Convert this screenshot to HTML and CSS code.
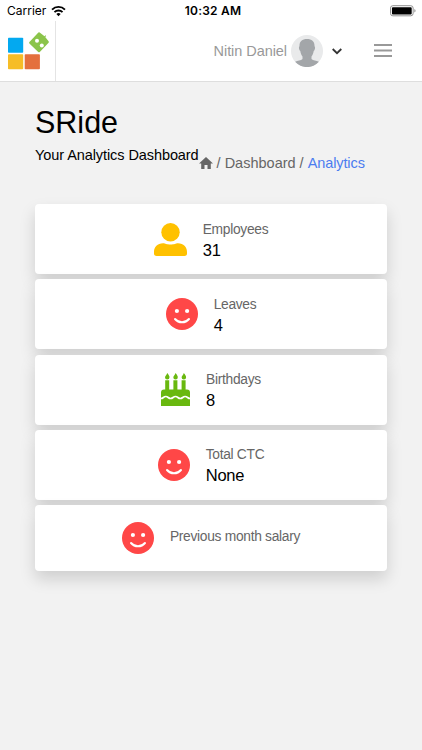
FILE: index.html
```html
<!DOCTYPE html>
<html lang="en">
<head>
    <meta charset="UTF-8">
    <meta name="viewport" content="width=device-width, initial-scale=1">
    <title>SRide</title>
    <link rel="stylesheet" href="styles.css">
</head>
<body>
    <svg width="0" height="0" class="icon-defs">
        <symbol id="smile" viewBox="0 0 32 32">
            <circle cx="16" cy="16" r="16" fill="#ff4747"/>
            <circle cx="10.9" cy="13" r="2.1" fill="#fff"/>
            <circle cx="21.1" cy="13" r="2.1" fill="#fff"/>
            <path d="M9 21c3.600 4.400 10.400 4.400 14 0" fill="none" stroke="#fff" stroke-width="2" stroke-linecap="round"/>
        </symbol>
    </svg>

    <div class="status-bar">
        <div class="carrier">
            <span>Carrier</span>
            <svg class="wifi" viewBox="0 0 16 12">
                <g fill="none" stroke="#000" stroke-width="2">
                    <path d="M1.1 4.5a9.8 9.8 0 0 1 13.8 0"/>
                    <path d="M3.7 7.2a6.1 6.1 0 0 1 8.6 0"/>
                </g>
                <path d="M5.7 9.2a3.3 3.3 0 0 1 4.6 0L8 11.5z"/>
            </svg>
        </div>
        <div class="clock">10:32 AM</div>
        <svg class="battery" viewBox="0 0 28 12">
            <rect x=".5" y=".5" width="23.5" height="10.5" rx="2.5" fill="#fff" stroke="#8c8c8c"/>
            <rect x="2" y="2" width="20.5" height="7.5" rx="1"/>
            <path d="M25.3 4v3.6c1.6-.5 1.6-3.1 0-3.6z" fill="#8c8c8c"/>
        </svg>
    </div>

    <header class="navbar">
        <div class="brand">
            <svg width="44" height="40" viewBox="0 0 44 40">
                <rect y="6.8" width="15.2" height="15" rx=".8" fill="#03a9f0"/>
                <rect y="23.2" width="15.2" height="15" rx=".8" fill="#f6bd27"/>
                <rect x="16.7" y="23.2" width="15.2" height="15" rx=".8" fill="#e4703d"/>
                <path d="M30.4 1.5q.6-.6 1.3 0l4.8 3.7 1-1 .7.7-1 1 3.400 4.300q.6.8 0 1.500l-8.800 9.200q-.8.7-1.600 0l-8.800-8.400q-.7-.8 0-1.600z" fill="#8bc44a"/>
                <circle cx="29" cy="9.8" r="2" fill="#fff"/>
                <circle cx="33.8" cy="14.5" r="2" fill="#fff"/>
            </svg>
        </div>
        <div class="user">
            <span class="user-name">Nitin Daniel</span>
            <svg class="avatar" viewBox="0 0 32 32">
                <circle cx="16" cy="16" r="16" fill="#e9eaeb"/>
                <path d="M16 4c-5 0-7.800 2.800-7.500 7.300-1 .4-.6 3.800.8 4.600.4 2.500 1.200 4.300 2.200 5.500v2.600c-1.600 1.700-4.800 1.600-7.400 2.800A16 16 0 0 0 27.900 26.800c-2.600-1.200-5.800-1.100-7.400-2.800v-2.600c1-1.200 1.800-3 2.200-5.500 1.400-.8 1.800-4.200.8-4.600C23.800 6.800 21 4 16 4z" fill="#a3a6a9"/>
            </svg>
            <svg class="chevron" viewBox="0 0 10 7"><path d="M.7 1l4.300 4.200L9.300 1"/></svg>
        </div>
        <svg class="menu" viewBox="0 0 18 13"><path d="M0 0h18v2H0zM0 5.500h18v2H0zM0 11h18v2H0z"/></svg>
    </header>

    <main class="page">
        <h1>SRide</h1>
        <div class="sub-header">
            <span class="subtitle">Your Analytics Dashboard</span>
            <nav class="breadcrumb">
                <svg class="home" viewBox="0 0 14 12"><path d="M5.500 12V8h3v4h3.300V6.500H14L7 0 0 6.500h2.200V12z"/></svg>
                <span>/ Dashboard /</span>
                <a class="active">Analytics</a>
            </nav>
        </div>

        <div class="cards">
            <div class="card">
                <svg class="icon" viewBox="0 0 33 33">
                    <circle cx="16.5" cy="9.2" r="9.2" fill="#ffc100"/>
                    <path d="M9 20.300c2.500 0 3.500 1.300 7.500 1.300s5-1.300 7.500-1.300c5.500 0 9 3.500 9 8.700V30.500q0 2.500-2.500 2.500h-28Q0 33 0 30.500V29c0-5.200 3.500-8.700 9-8.700z" fill="#ffc100"/>
                </svg>
                <div class="info">
                    <div class="label">Employees</div>
                    <div class="value">31</div>
                </div>
            </div>
            <div class="card">
                <svg class="icon smile"><use href="#smile"/></svg>
                <div class="info">
                    <div class="label">Leaves</div>
                    <div class="value">4</div>
                </div>
            </div>
            <div class="card">
                <svg class="icon cake" viewBox="0 0 29 33">
                    <g fill="#69b80f">
                        <path d="M6.200 0C7.800 2 8.500 3 8.500 4.200a2.200 2.200 0 0 1-4.500 0C4 3 5.600 2.500 6.200 0zM14.500 0c1.600 2 2.300 3 2.300 4.200a2.200 2.200 0 0 1-4.500 0c0-1.200 1.600-1.700 2.200-4.200zM22.800 0c1.600 2 2.300 3 2.300 4.200a2.200 2.200 0 0 1-4.500 0c0-1.200 1.600-1.700 2.200-4.200z"/>
                        <path d="M4.200 7.300h4v9.200h4.200V7.300h4v9.200h4.200V7.300h4v9.200H26q3 0 3 3V33H0V19.500q0-3 3-3h1.200z"/>
                    </g>
                    <path d="M0 25.500c2.400 0 2.400-2 4.800-2s2.400 2 4.800 2 2.500-2 4.900-2 2.400 2 4.800 2 2.400-2 4.800-2 2.500 2 4.900 2" fill="none" stroke="#fff" stroke-width="1.7"/>
                </svg>
                <div class="info">
                    <div class="label">Birthdays</div>
                    <div class="value">8</div>
                </div>
            </div>
            <div class="card">
                <svg class="icon smile"><use href="#smile"/></svg>
                <div class="info">
                    <div class="label">Total CTC</div>
                    <div class="value">None</div>
                </div>
            </div>
            <div class="card short">
                <svg class="icon smile"><use href="#smile"/></svg>
                <div class="label">Previous month salary</div>
            </div>
        </div>
    </main>
</body>
</html>
```
FILE: styles.css
```css
* {
    margin: 0;
    padding: 0;
    box-sizing: border-box;
}

body {
    min-height: 100vh;
    background: #f2f2f2;
    font-family: 'Liberation Sans', Arial, sans-serif;
    color: #000;
    overflow: hidden;
}

svg {
    display: block;
    flex-shrink: 0;
}

.icon-defs {
    position: absolute;
}

.status-bar {
    display: grid;
    grid-template-columns: 1fr auto 1fr;
    align-items: center;
    height: 21px;
    padding: 0 5px 0 7px;
    background: #fff;
    font-family: Inter, sans-serif;
    font-size: 12px;
}

.carrier {
    display: flex;
    align-items: center;
    gap: 5px;
}

.wifi {
    width: 15px;
    height: 12px;
}

.clock {
    padding-left: 2px;
    font-weight: 600;
    letter-spacing: 0.2px;
}

.battery {
    width: 27px;
    height: 12px;
    justify-self: end;
}

.navbar {
    display: flex;
    align-items: center;
    height: 61px;
    padding-right: 30px;
    background: #fff;
    border-bottom: 1px solid #dedede;
}

.brand {
    width: 56px;
    height: 60px;
    padding: 10px 0 0 8px;
    border-right: 1px solid #e4e4e4;
}

.user {
    display: flex;
    align-items: center;
    margin-left: auto;
}

.user-name {
    font-size: 14.5px;
    letter-spacing: -0.06px;
    color: #999;
}

.avatar {
    width: 32px;
    height: 32px;
    margin-left: 4px;
}

.chevron {
    width: 10px;
    height: 7px;
    margin-left: 9px;
    fill: none;
    stroke: #333;
    stroke-width: 1.8;
}

.menu {
    width: 18px;
    height: 13px;
    margin: -2px 0 0 32px;
    fill: #999;
}

.page {
    padding: 22px 35px 0;
}

h1 {
    font-size: 30.5px;
    font-weight: 400;
    line-height: 36px;
}

.sub-header {
    display: flex;
    margin-top: 5px;
    white-space: nowrap;
}

.subtitle {
    font-size: 14.5px;
    letter-spacing: -0.08px;
    line-height: 20px;
}

.breadcrumb {
    display: flex;
    align-items: center;
    gap: 4px;
    height: 20px;
    margin-top: 8px;
    font-size: 14.5px;
    color: #666;
}

.home {
    width: 14px;
    height: 12px;
    fill: #666;
}

.active {
    letter-spacing: -0.1px;
    color: #4c7cf0;
}

.cards {
    display: flex;
    flex-direction: column;
    gap: 5.3px;
    margin-top: 31px;
}

.card {
    display: flex;
    justify-content: center;
    align-items: center;
    gap: 16px;
    height: 70px;
    background: #fff;
    border-radius: 4px;
    box-shadow: 0 8px 16px rgba(0, 0, 0, 0.15);
}

.card.short {
    height: 66px;
}

.icon {
    width: 33px;
    height: 33px;
}

.icon.smile {
    width: 32px;
    height: 32px;
}

.icon.cake {
    width: 29px;
}

.info {
    padding-top: 2px;
}

.label {
    font-size: 13.8px;
    letter-spacing: -0.3px;
    line-height: 19px;
    color: #666;
}

.short .label {
    margin-top: -3px;
}

.value {
    font-size: 16.5px;
    letter-spacing: -0.2px;
    line-height: 22px;
}
```
